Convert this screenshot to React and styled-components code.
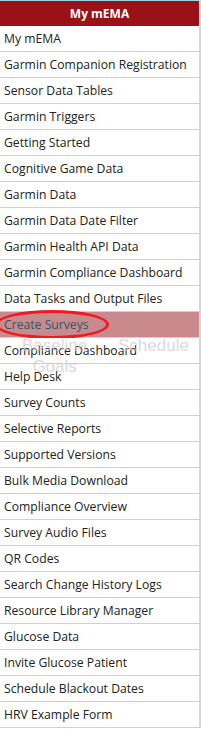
import React from "react"
import styled, { createGlobalStyle } from "styled-components"

const GlobalStyle = createGlobalStyle`
  html, body {
    margin: 0;
    padding: 0;
    background: #ffffff;
  }
  body {
    font-family: "Open Sans", "DejaVu Sans", sans-serif;
  }
`

const Panel = styled.nav`
  position: relative;
  width: 199px;
  border-top: 1px solid #9fd0dc;
  border-right: 2px solid #d6d6d6;
  background: #ffffff;
  box-shadow: 0 4px 6px rgba(0, 0, 0, 0.18);
`

const Header = styled.div`
  height: 25px;
  background: #9a1118;
  color: #ffffff;
  font-weight: 700;
  font-size: 12px;
  display: flex;
  align-items: center;
  justify-content: center;
`

const List = styled.ul`
  list-style: none;
  margin: 0;
  padding: 0;
`

const Item = styled.li`
  height: 25px;
  border-bottom: 1px solid #cfcfcf;
  display: flex;
  align-items: center;
  padding-left: 4px;
  font-size: 12.2px;
  color: ${(p) => (p.$active ? "#2c5868" : "#222222")};
  background: ${(p) => (p.$active ? "#c98a8d" : "#ffffff")};
  position: relative;
  white-space: nowrap;
`

const Circle = styled.span`
  position: absolute;
  left: -5px;
  top: -2px;
  width: 114px;
  height: 29px;
  border: 3px solid #ec1c22;
  border-radius: 50%;
  box-sizing: border-box;
`

const Ghost = styled.span`
  position: absolute;
  left: ${(p) => p.x}px;
  top: ${(p) => p.y}px;
  font-family: "Liberation Sans", Arial, sans-serif;
  font-size: 17px;
  color: rgba(205, 205, 205, 0.75);
  text-align: center;
  line-height: 21px;
  pointer-events: none;
`

const items = [
  "My mEMA",
  "Garmin Companion Registration",
  "Sensor Data Tables",
  "Garmin Triggers",
  "Getting Started",
  "Cognitive Game Data",
  "Garmin Data",
  "Garmin Data Date Filter",
  "Garmin Health API Data",
  "Garmin Compliance Dashboard",
  "Data Tasks and Output Files",
  "Create Surveys",
  "Compliance Dashboard",
  "Help Desk",
  "Survey Counts",
  "Selective Reports",
  "Supported Versions",
  "Bulk Media Download",
  "Compliance Overview",
  "Survey Audio Files",
  "QR Codes",
  "Search Change History Logs",
  "Resource Library Manager",
  "Glucose Data",
  "Invite Glucose Patient",
  "Schedule Blackout Dates",
  "HRV Example Form",
]

const App = () => {
  return (
    <>
      <GlobalStyle />
      <Panel>
        <Header>My mEMA</Header>
        <List>
          {items.map((label) => (
            <Item key={label} $active={label === "Create Surveys"}>
              {label}
              {label === "Create Surveys" && <Circle />}
            </Item>
          ))}
        </List>
        <Ghost x={22} y={334}>Baseline<br />Goals</Ghost>
        <Ghost x={118} y={334}>Schedule</Ghost>
      </Panel>
    </>
  )
}

export default App
